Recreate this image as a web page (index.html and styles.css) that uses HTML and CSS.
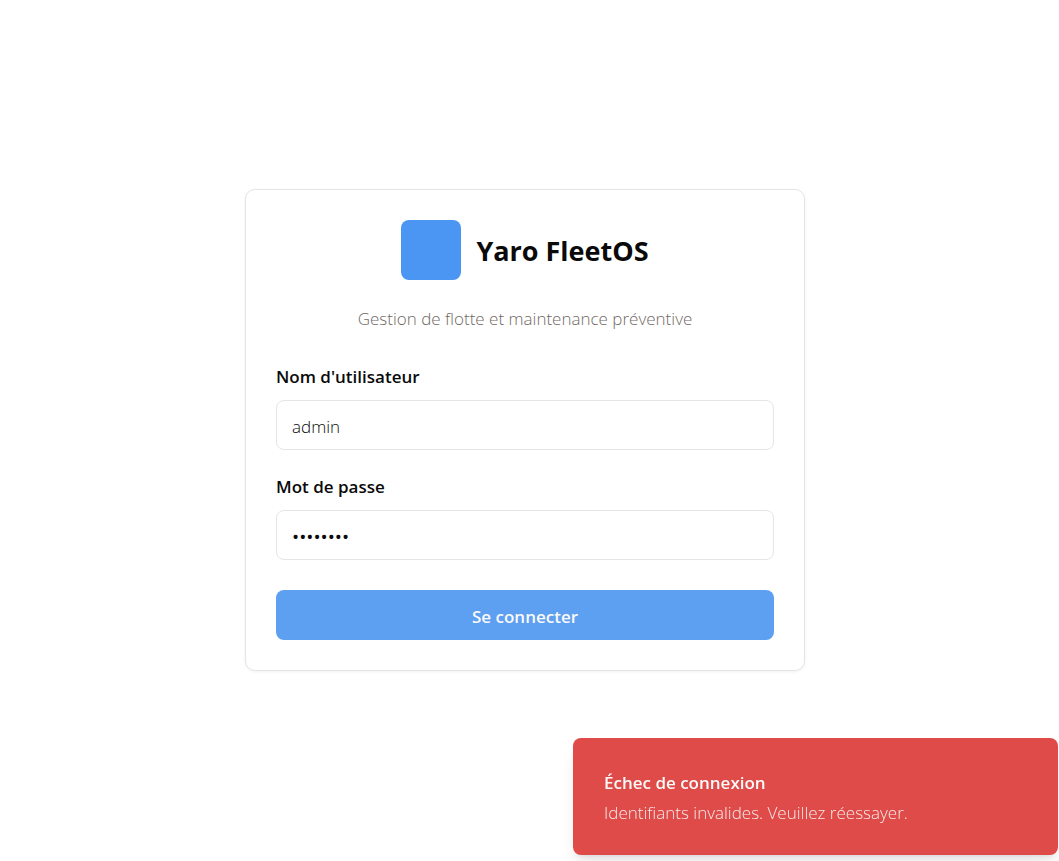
FILE: index.html
```html
<!DOCTYPE html>
<html lang="fr">
<head>
<meta charset="utf-8">
<meta name="viewport" content="width=device-width, initial-scale=1">
<title>Yaro FleetOS</title>
<link rel="stylesheet" href="styles.css">
</head>
<body>
<main class="page">
  <section class="card">
    <header class="card-header">
      <div class="brand">
        <span class="brand-mark"></span>
        <h1 class="brand-name">Yaro FleetOS</h1>
      </div>
      <p class="tagline">Gestion de flotte et maintenance préventive</p>
    </header>
    <form class="form">
      <div class="field">
        <label class="label" for="username">Nom d'utilisateur</label>
        <input class="input" id="username" type="text" value="admin">
      </div>
      <div class="field">
        <label class="label" for="password">Mot de passe</label>
        <input class="input input-password" id="password" type="password" value="admin123">
      </div>
      <button class="submit" type="button">Se connecter</button>
    </form>
  </section>
</main>
<div class="toast" role="alert">
  <p class="toast-title">Échec de connexion</p>
  <p class="toast-text">Identifiants invalides. Veuillez réessayer.</p>
</div>
</body>
</html>
```
FILE: styles.css
```css
* {
  box-sizing: border-box;
}

body {
  margin: 0;
  background: #fff;
  color: #0a0a0a;
  font-family: "Segoe UI", "Open Sans", "Noto Sans", sans-serif;
  font-size: 17px;
  font-weight: 350;
  line-height: 26px;
}

h1,
p {
  margin: 0;
}

.page {
  display: flex;
  align-items: center;
  justify-content: center;
  min-height: 100vh;
  padding: 20px 29px 22px 20px;
}

.card {
  width: 100%;
  max-width: 560px;
  padding: 30px;
  border: 1px solid #e5e5e5;
  border-radius: 10px;
  background: #fff;
  box-shadow: 0 1px 3px rgba(0, 0, 0, 0.06);
}

.card-header {
  display: flex;
  flex-direction: column;
  align-items: center;
  gap: 26px;
  margin-bottom: 32px;
  text-align: center;
}

.brand {
  display: flex;
  align-items: center;
  gap: 15px;
}

.brand-mark {
  width: 60px;
  height: 60px;
  border-radius: 8px;
  background: #4b95f3;
}

.brand-name {
  padding-top: 2px;
  font-size: 27px;
  font-weight: 700;
  line-height: 40px;
}

.tagline {
  color: #706964;
}

.form {
  display: flex;
  flex-direction: column;
  gap: 30px;
}

.field {
  display: flex;
  flex-direction: column;
  gap: 10px;
}

.field + .field {
  margin-top: -6px;
}

.label {
  font-weight: 600;
  line-height: 26px;
}

.input {
  width: 100%;
  height: 50px;
  padding: 4px 15px 0;
  border: 1px solid #e5e5e5;
  border-radius: 8px;
  background: #fff;
  color: #0a0a0a;
  font: inherit;
}

.input-password {
  font-size: 19px;
  font-weight: 400;
}

.submit {
  height: 50px;
  padding: 4px 20px 0;
  border: 0;
  border-radius: 8px;
  background: #5d9ff1;
  color: #fafafa;
  font: inherit;
  font-weight: 600;
}

.toast {
  position: fixed;
  right: 1px;
  bottom: 6px;
  width: 485px;
  max-width: calc(100% - 2px);
  padding: 32px 31px 29px;
  border-radius: 8px;
  background: #df4b49;
  color: #fafafa;
  box-shadow: 0 10px 15px -3px rgba(0, 0, 0, 0.1), 0 4px 6px -4px rgba(0, 0, 0, 0.1);
}

.toast-title {
  margin-bottom: 4px;
  font-weight: 600;
}

.toast-text {
  opacity: 0.9;
}
```
